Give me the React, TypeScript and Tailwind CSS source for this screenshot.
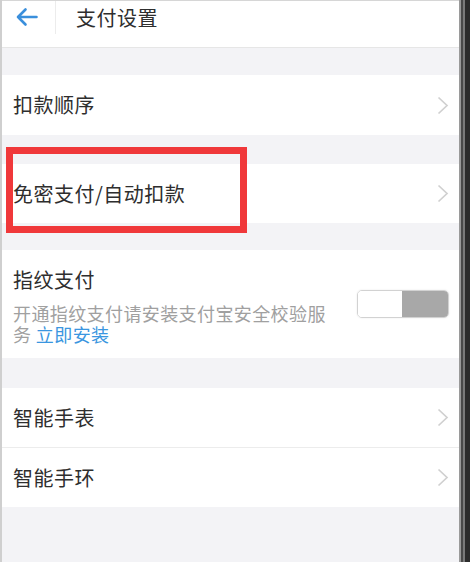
import React from "react";

const font = { fontFamily: '"Noto Sans CJK SC", "Noto Sans", sans-serif' };

function Chevron() {
  return (
    <svg width="12" height="19" viewBox="0 0 12 19" className="shrink-0">
      <polyline points="1.5,1.5 10,9.5 1.5,17.5" fill="none" stroke="#d0d0d0" strokeWidth="1.7" />
    </svg>
  );
}

function Row({ label, h, border }: { label: string; h: string; border?: boolean }) {
  return (
    <div className={`${h} bg-white flex items-center justify-between pl-[11px] pr-[10px] ${border ? "border-b border-[#ececec]" : ""}`}>
      <span className="text-[20px] tracking-[0.5px] text-[#2e2e2e]">{label}</span>
      <Chevron />
    </div>
  );
}

export default function App() {
  return (
    <div className="w-[470px] h-[562px] flex overflow-hidden relative" style={font}>
      <div className="w-[2px] bg-[#cfcfcf]" />
      <div className="flex-1 flex flex-col bg-[#f3f3f6] border-t border-[#d6d6d6]">
        <div className="h-[47px] bg-white border-b border-[#e6e6e6] flex items-start">
          <div className="h-[32px] flex items-center pl-[13px]">
            <svg width="23" height="20" viewBox="0 0 23 20">
              <path d="M21.5 10H3M10.5 2.5L3 10l7.5 7.5" fill="none" stroke="#3a8fdc" strokeWidth="2.6" strokeLinecap="round" strokeLinejoin="round" />
            </svg>
          </div>
          <div className="w-[1px] h-[33px] bg-[#ececec] ml-[17px]" />
          <div className="h-[33px] flex items-center ml-[20px] text-[20px] tracking-[0.5px] text-[#2e2e2e]">支付设置</div>
        </div>
        <div className="h-[27px]" />
        <Row label="扣款顺序" h="h-[60px]" />
        <div className="h-[29px]" />
        <Row label="免密支付/自动扣款" h="h-[59px]" />
        <div className="h-[27px]" />
        <div className="h-[108px] bg-white flex items-center justify-between pl-[11px] pr-[10px]">
          <div className="flex flex-col pt-[2px]">
            <span className="text-[20px] leading-[28px] tracking-[0.5px] text-[#2e2e2e]">指纹支付</span>
            <p className="w-[320px] mt-[9px] text-[18px] leading-[21px] tracking-[0.4px] text-[#a0a0a0]">
              开通指纹支付请安装支付宝安全校验服务 <span className="text-[#3a96e0]">立即安装</span>
            </p>
          </div>
          <div className="w-[92px] h-[28px] rounded-[5px] border border-[#d2d2d2] flex overflow-hidden shadow-[0_0_2px_rgba(0,0,0,0.1)]">
            <div className="flex-1 bg-white" />
            <div className="w-[46px] bg-[#a8a8a8]" />
          </div>
        </div>
        <div className="h-[30px]" />
        <Row label="智能手表" h="h-[60px]" border />
        <Row label="智能手环" h="h-[59px]" />
        <div className="flex-1" />
      </div>
      <div className="w-[2px] bg-[#9a9a9a]" />
      <div className="w-[2px] bg-[#4a4a4a]" />
      <div className="w-[2px] bg-[#7a7a7a]" />
      <div className="w-[5px] bg-[#2c2c2c]" />
      <div className="absolute left-[6px] top-[147px] w-[241px] h-[86px] border-[7px] border-[#f0383a]" />
    </div>
  );
}
